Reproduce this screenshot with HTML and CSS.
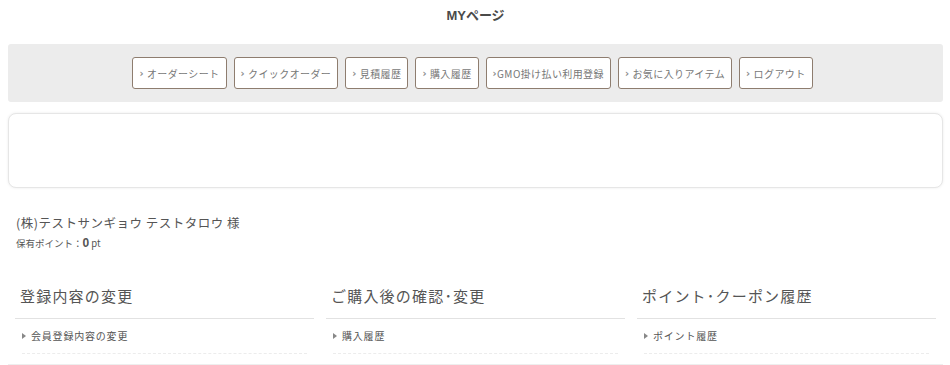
FILE: index.html
```html
<!DOCTYPE html>
<html lang="ja">
<head>
<meta charset="utf-8">
<title>MYページ</title>
<link rel="stylesheet" href="styles.css">
</head>
<body>
<div class="page">
  <h1 class="page-title">MYページ</h1>
  <nav class="menu-bar">
    <a class="menu-btn" href="#"><span class="chev">›</span>オーダーシート</a>
    <a class="menu-btn" href="#"><span class="chev">›</span>クイックオーダー</a>
    <a class="menu-btn" href="#"><span class="chev">›</span>見積履歴</a>
    <a class="menu-btn" href="#"><span class="chev">›</span>購入履歴</a>
    <a class="menu-btn" href="#"><span class="chev tight">›</span>GMO掛け払い利用登録</a>
    <a class="menu-btn" href="#"><span class="chev">›</span>お気に入りアイテム</a>
    <a class="menu-btn" href="#"><span class="chev">›</span>ログアウト</a>
  </nav>
  <div class="notice-card"></div>
  <div class="user-info">
    <p class="user-name">(株)テストサンギョウ テストタロウ 様</p>
    <p class="user-points">保有ポイント：<strong>0</strong> pt</p>
  </div>
  <div class="sections">
    <section class="section">
      <h2 class="section-title">登録内容の変更</h2>
      <ul class="section-list">
        <li><a href="#">会員登録内容の変更</a></li>
      </ul>
    </section>
    <section class="section">
      <h2 class="section-title">ご購入後の確認･変更</h2>
      <ul class="section-list">
        <li><a href="#">購入履歴</a></li>
      </ul>
    </section>
    <section class="section">
      <h2 class="section-title">ポイント･クーポン履歴</h2>
      <ul class="section-list">
        <li><a href="#">ポイント履歴</a></li>
      </ul>
    </section>
  </div>
  <div class="bottom-rule"></div>
</div>
</body>
</html>
```
FILE: styles.css
```css
* { box-sizing: border-box; }
html, body { margin: 0; padding: 0; background: #fff; }
body {
  font-family: "Noto Sans CJK JP", "Noto Sans", sans-serif;
  color: #555;
}
.page { padding: 0 7px 0 8px; }
.page-title {
  margin: 0;
  height: 44px;
  padding-top: 5px;
  text-align: center;
  font-size: 13px;
  font-weight: bold;
  color: #4a4a4a;
  font-family: "Liberation Sans", "Noto Sans CJK JP", sans-serif;
}
.menu-bar {
  background: #ececec;
  border-radius: 3px;
  height: 58px;
  display: flex;
  justify-content: center;
  align-items: center;
  gap: 7px;
  padding-right: 6px;
}
.menu-btn {
  display: flex;
  align-items: center;
  height: 32px;
  padding: 0 6px 0 6px;
  background: #fff;
  border: 1px solid #8e7d6f;
  border-radius: 3px;
  font-size: 10px;
  color: #777;
  text-decoration: none;
  letter-spacing: 0.4px;
  white-space: nowrap;
}
.chev {
  font-family: "DejaVu Sans", sans-serif;
  font-weight: bold;
  font-size: 10px;
  color: #8a8a8a;
  margin-right: 3px;
}
.chev.tight { margin-right: 0; }
.notice-card {
  margin-top: 11px;
  height: 75px;
  border: 1px solid #e6e6e6;
  border-radius: 8px;
  box-shadow: 0 0 3px rgba(0,0,0,0.08);
  background: #fff;
}
.user-info { padding: 26px 0 0 8px; }
.user-name {
  margin: 0;
  font-size: 12.5px;
  letter-spacing: 0.5px;
  color: #555;
  line-height: 18px;
}
.user-points {
  margin: 4px 0 0;
  font-size: 9.5px;
  color: #555;
  line-height: 14px;
}
.user-points strong { font-size: 12px; font-family: "Liberation Sans", sans-serif; }
.sections {
  display: grid;
  grid-template-columns: repeat(3, 1fr);
  gap: 12px;
  margin-top: 36px;
  padding: 0 7px 0 7px;
}
.section-title {
  margin: 0;
  padding: 0 0 12px 5px;
  font-size: 15px;
  font-weight: normal;
  letter-spacing: 1.2px;
  color: #555;
  line-height: 20px;
  border-bottom: 1px solid #e2e2e2;
}
.section-list {
  list-style: none;
  margin: 0;
  padding: 0 7px;
}
.section-list li {
  padding: 8px 0 8px 0;
  border-bottom: 1px dashed #ececec;
  line-height: 18px;
}
.section-list a {
  display: flex;
  align-items: center;
  font-size: 10px;
  letter-spacing: 0.8px;
  color: #555;
  text-decoration: none;
}
.section-list a::before {
  content: "";
  display: inline-block;
  width: 0; height: 0;
  border-top: 3px solid transparent;
  border-bottom: 3px solid transparent;
  border-left: 4px solid #888;
  margin-right: 5px;
}
.bottom-rule {
  margin-top: 10px;
  border-top: 1px solid #eee;
}
```
